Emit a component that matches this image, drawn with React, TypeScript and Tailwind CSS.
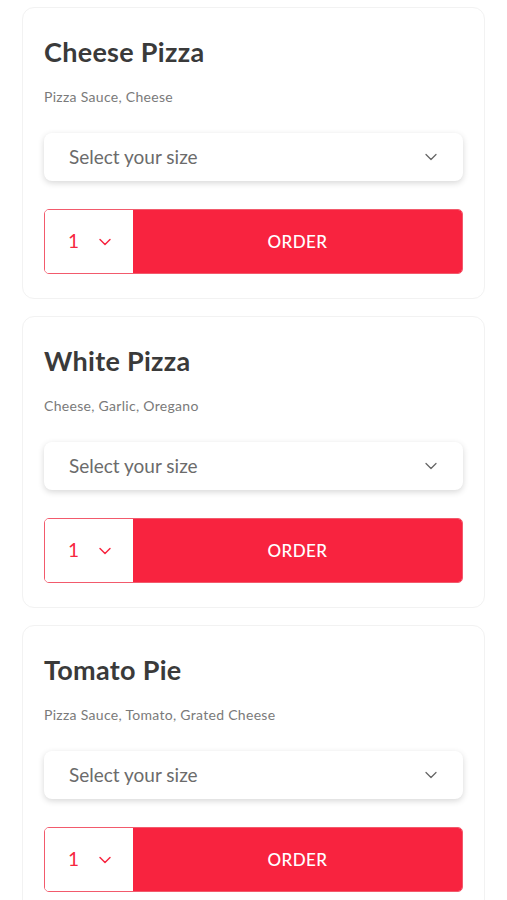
import { ChevronDown } from "lucide-react";

const pizzas = [
  { name: "Cheese Pizza", toppings: "Pizza Sauce, Cheese" },
  { name: "White Pizza", toppings: "Cheese, Garlic, Oregano" },
  { name: "Tomato Pie", toppings: "Pizza Sauce, Tomato, Grated Cheese" },
];

function PizzaCard({ name, toppings }: { name: string; toppings: string }) {
  return (
    <div className="rounded-xl border border-[#f2f2f2] bg-white px-[21px] pt-[28px] pb-[24px]">
      <h2 className="text-[27px] font-bold leading-[32px] tracking-[0.3px] text-[#3a3a3a]">{name}</h2>
      <p className="mt-[19px] text-[14px] leading-[20px] tracking-[0.3px] text-[#7a7a7a]">{toppings}</p>

      {/* size select */}
      <div className="mt-[26px] flex h-[48px] items-center justify-between rounded-lg bg-white pl-[25px] pr-[22px] shadow-[0_2px_6px_rgba(0,0,0,0.16)]">
        <span className="text-[19px] text-[#6b6b6b]">Select your size</span>
        <ChevronDown className="h-5 w-5 text-[#666]" strokeWidth={1.5} />
      </div>

      {/* qty + order */}
      <div className="mt-[28px] flex h-[65px] overflow-hidden rounded-[5px] border-[1.5px] border-[#f25a6c]">
        <div className="flex w-[88px] items-center gap-[16px] bg-white pl-[23px]">
          <span className="text-[19px] text-[#f72640]">1</span>
          <ChevronDown className="h-5 w-5 text-[#f72640]" strokeWidth={1.75} />
        </div>
        <button className="flex flex-1 items-center justify-center bg-[#f8233f] text-[17px] font-medium tracking-wide text-white">
          ORDER
        </button>
      </div>
    </div>
  );
}

export default function App() {
  return (
    <div
      className="min-h-[900px] bg-white px-[22px] pt-[7px]"
      style={{ fontFamily: "Lato, 'Noto Sans', sans-serif" }}
    >
      <div className="flex flex-col gap-[17px]">
        {pizzas.map((p) => (
          <PizzaCard key={p.name} name={p.name} toppings={p.toppings} />
        ))}
      </div>
    </div>
  );
}
